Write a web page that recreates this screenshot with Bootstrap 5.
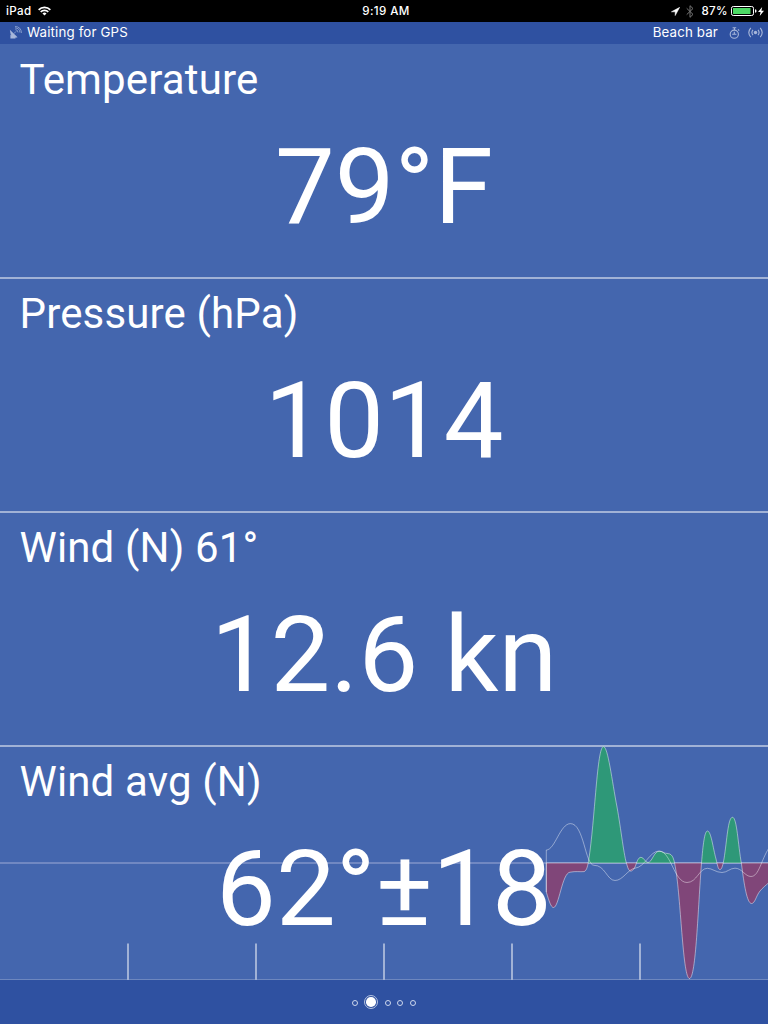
<!DOCTYPE html>
<html lang="en">
<head>
<meta charset="utf-8">
<meta name="viewport" content="width=device-width, initial-scale=1">
<title>Weather instruments</title>
<link href="https://cdn.jsdelivr.net/npm/bootstrap@5.3.0/dist/css/bootstrap.min.css" rel="stylesheet">
<style>
body { background: #4466ae; font-family: Inter, Roboto, sans-serif; }
.screen { width: 768px; height: 1024px; }
.sysbar { height: 22px; background: #000; font-size: 11.6px; font-weight: 500; letter-spacing: .38px; line-height: 22px; }
.infobar { height: 22px; background: #2f51a1; font-size: 13.3px; line-height: 20px; padding-bottom: 2px; }
.infobar span { letter-spacing: .15px; }
.infobar .ic { position: relative; top: .5px; }
.panel { height: 234px; border-bottom: 2px solid #a1b2d6; font-family: Roboto, sans-serif; }
.panel-first { height: 235px; padding-top: 1px; }
.panel-last { height: 233px; border-bottom: 1px solid #6d87bf; }
.caption { font-size: 42px; line-height: 50px; letter-spacing: .15px; padding: 10px 0 0 19.5px; font-weight: 400; }
.reading { font-size: 106.4px; line-height: 120px; padding-top: 22px; white-space: pre; }
.trend { overflow: visible; }
.pager { background: #2f51a1; padding: 2px 1px 0 0; }
.dot { width: 6px; height: 6px; border: 1px solid #ccd6ec; border-radius: 50%; }
.dot-on { width: 14px; height: 14px; border: 1px solid #b4c2e0; border-radius: 50%; background: #fff; background-clip: content-box; padding: 1.2px; }
.ic { display: block; }
</style>
</head>
<body>
<div class="screen d-flex flex-column overflow-hidden text-white">
  <header class="sysbar position-relative d-flex justify-content-between">
    <div class="d-flex align-items-center" style="padding-left:6px">
      <span>iPad</span>
      <svg class="ic" style="margin-left:6px" width="13" height="10" viewBox="0 0 14 10" fill="none" stroke="#fff" stroke-width="1.8"><path d="M.7 3.7a8.8 8.8 0 0 1 12.6 0M2.9 6a5.8 5.8 0 0 1 8.2 0"/><path d="M4.8 7.7a3.1 3.1 0 0 1 4.4 0L7 9.9z" fill="#fff" stroke="none"/></svg>
    </div>
    <span class="position-absolute start-50 translate-middle-x ps-1">9:19 AM</span>
    <div class="d-flex align-items-center pe-1">
      <svg class="ic" width="9" height="9" viewBox="0 0 9 9" fill="#fff" stroke="#fff" stroke-width=".5"><path d="M8.7.3.4 4.8h3.8v3.8z"/></svg>
      <svg class="ic" style="margin:0 7px 0 6px" width="8" height="13" viewBox="0 0 8 13" fill="none" stroke="#777" stroke-width="1"><path d="M.7 3.3 7 9.4 4 12.3V.7l3 2.8L.7 9.6"/></svg>
      <span>87%</span>
      <svg class="ic" style="margin-left:3px" width="26" height="10" viewBox="0 0 26 10"><rect x=".5" y=".5" width="22" height="9" rx="1.8" fill="none" stroke="#fff"/><rect x="2" y="2" width="17.5" height="6" fill="#4cd964"/><path d="M24 3.3q1.6.2 1.6 1.7T24 6.7z" fill="#fff"/></svg>
      <svg class="ic" style="margin-left:1px" width="6" height="9" viewBox="0 0 6 9" fill="#fff"><path d="M4.2 0 0 5h2.6L1.7 9 6 3.8H3.4z"/></svg>
    </div>
  </header>

  <div class="infobar d-flex justify-content-between">
    <div class="d-flex align-items-center" style="padding-left:9px">
      <svg class="ic" width="13" height="13" viewBox="0 0 13 13"><path d="M.8 3.8 8.6 11.2Q5.8 12.4 3.4 10.4T.8 3.8zM1.4 12.6V8.4l5.4 4.2z" fill="#a8b7da"/><path d="m4.8 7.7 2.3-2.3M6.4 3.6q2.4.2 2.6 2.8M6 1.9q4.6.1 5 4.7M6 .5q6 .1 6.5 6.4" fill="none" stroke="#8fa3d0" stroke-width=".9"/></svg>
      <span style="margin-left:5px">Waiting for GPS</span>
    </div>
    <div class="d-flex align-items-center" style="padding-right:5px">
      <span>Beach bar</span>
      <svg class="ic" style="margin-left:11px" width="11" height="12" viewBox="0 0 11 12" fill="none" stroke="#a8b7da" stroke-width="1.1"><circle cx="5.3" cy="7.2" r="4.1"/><path d="M3.6.7h3.6M5.4.7V3M9 2.4l1.2 1.2M5.3 4.7v2.5M3.2 7.2h4.2"/></svg>
      <svg class="ic" style="margin-left:8px" width="15" height="11" viewBox="0 0 15 11" fill="none" stroke="#a8b7da" stroke-width="1.1"><circle cx="7.5" cy="5.5" r="1.7" fill="#a8b7da" stroke="none"/><path d="M5 2.8q-2.2 2.7 0 5.4M10 2.8q2.2 2.7 0 5.4M2.8.8q-4 4.7 0 9.4M12.2.8q4 4.7 0 9.4"/></svg>
    </div>
  </div>

  <section class="panel panel-first flex-shrink-0"><h1 class="caption m-0">Temperature</h1><div class="reading text-center">79°F</div></section>
  <section class="panel flex-shrink-0"><h2 class="caption m-0">Pressure (hPa)</h2><div class="reading text-center">1014</div></section>
  <section class="panel flex-shrink-0"><h2 class="caption m-0">Wind (N) 61°</h2><div class="reading text-center">12.6 kn</div></section>
  <section class="panel panel-last flex-shrink-0 position-relative">
    <svg class="trend position-absolute top-0 start-0" width="768" height="233" viewBox="0 747 768 233">
      <defs>
        <clipPath id="over"><path d="M0 746h768v117H0z"/></clipPath>
        <clipPath id="under"><path d="M0 863h768v117H0z"/></clipPath>
        <path id="trend" d="M546.3 863V892C549 901 551 907.5 553.5 907.5C559 907.5 562 873 570 872.2C576 871 580 872 584 871.6C587 871 588 864 588.7 860C595 820 597 746.6 603.5 746.6C608 746.6 612 781 617 807C621 829 624 857 627 865C629 873 632 872.5 635 867C637 862 638 857.3 641 857.3C644 857.3 645 862.5 648 862.5C652 862.5 654 851.3 659 851.3C663 851.3 664 853.5 668 853.6C673 854 674 859 676 871C681 903 683 978.5 689.5 978.5C696 978.5 698 907 701.5 863C703 845 704.5 831 707.5 831C711 831 713 848 716 859C717.5 865 718 869.5 720 869.5C722 869.5 723 864 724 859C727 840 728 817.3 732.5 817.3C737 817.3 738 845 741.5 864C744 884 747 903.5 751.5 903.5C755 903.5 756 896 760 891C763 887.5 765 886 769 882.5V863z"/>
      </defs>
      <path d="M0 863h768" stroke="#8094c8" stroke-width="1.6"/>
      <use href="#trend" fill="#2e9878" clip-path="url(#over)"/>
      <use href="#trend" fill="#804679" clip-path="url(#under)"/>
      <use href="#trend" fill="none" stroke="#fff" stroke-opacity=".45" stroke-width="1"/>
      <path d="M546.3 892V850C555 850 560 823.6 570.5 823.6C584 823.6 585 865 594 865.3C605 865 607 880.5 615 880.5C623 880.5 628 869 635 868.2C645 867 650 851 659 851C671 851 674 882.5 687 882.5C697 882.5 699 868.3 707.5 868.3C712 868.3 716 872.5 722 872.5C727 872.5 730 868.2 735 868.2C742 868.2 745 876.5 751 876.5C759 876.5 761 860 769 848" fill="none" stroke="#fff" stroke-opacity=".42" stroke-width="1"/>
      <path d="M128 943.5V980M256 943.5V980M384 943.5V980M512 943.5V980M640 943.5V980" stroke="#a1b2d6" stroke-width="2"/>
    </svg>
    <div class="position-relative"><h2 class="caption m-0">Wind avg (N)</h2><div class="reading text-center">62°±18</div></div>
  </section>

  <footer class="pager flex-grow-1 d-flex justify-content-center align-items-center">
    <i class="dot"></i><i class="dot-on" style="margin:0 7px 2px 6px"></i><i class="dot"></i><i class="dot" style="margin:0 6.5px"></i><i class="dot"></i>
  </footer>
</div>
<script src="https://cdn.jsdelivr.net/npm/bootstrap@5.3.0/dist/js/bootstrap.bundle.min.js"></script>
</body>
</html>
